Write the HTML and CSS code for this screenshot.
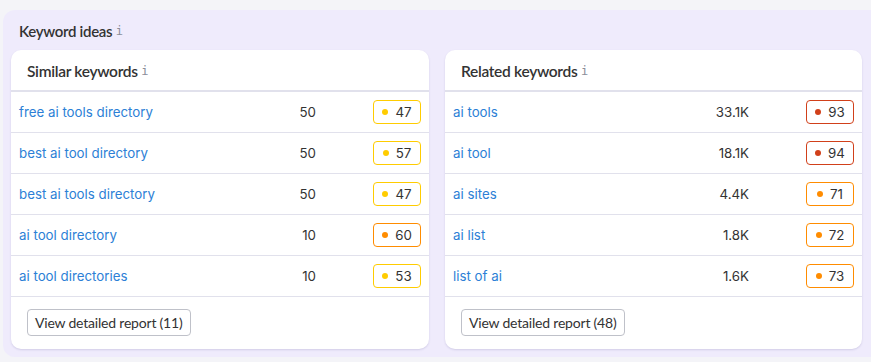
FILE: index.html
```html
<!DOCTYPE html>
<html>
<head>
    <title>Keyword ideas</title>
    <meta charset="UTF-8">
    <link rel="stylesheet" href="styles.css">
</head>
<body>
    <div class="panel">
        <h2 class="panel-title">Keyword ideas <span class="info">i</span></h2>
        <div class="cards">
            <div class="card">
                <h3 class="card-title">Similar keywords <span class="info">i</span></h3>
                <div class="rows">
                    <div class="row"><a href="#">free ai tools directory</a><span class="vol">50</span><span class="kd kd-yellow"><i></i>47</span></div>
                    <div class="row"><a href="#">best ai tool directory</a><span class="vol">50</span><span class="kd kd-yellow"><i></i>57</span></div>
                    <div class="row"><a href="#">best ai tools directory</a><span class="vol">50</span><span class="kd kd-yellow"><i></i>47</span></div>
                    <div class="row"><a href="#">ai tool directory</a><span class="vol">10</span><span class="kd kd-orange"><i></i>60</span></div>
                    <div class="row"><a href="#">ai tool directories</a><span class="vol">10</span><span class="kd kd-yellow"><i></i>53</span></div>
                </div>
                <div class="card-foot"><button>View detailed report (11)</button></div>
            </div>
            <div class="card">
                <h3 class="card-title">Related keywords <span class="info">i</span></h3>
                <div class="rows">
                    <div class="row"><a href="#">ai tools</a><span class="vol">33.1K</span><span class="kd kd-red"><i></i>93</span></div>
                    <div class="row"><a href="#">ai tool</a><span class="vol">18.1K</span><span class="kd kd-red"><i></i>94</span></div>
                    <div class="row"><a href="#">ai sites</a><span class="vol">4.4K</span><span class="kd kd-orange"><i></i>71</span></div>
                    <div class="row"><a href="#">ai list</a><span class="vol">1.8K</span><span class="kd kd-orange"><i></i>72</span></div>
                    <div class="row"><a href="#">list of ai</a><span class="vol">1.6K</span><span class="kd kd-orange"><i></i>73</span></div>
                </div>
                <div class="card-foot"><button>View detailed report (48)</button></div>
            </div>
        </div>
    </div>
</body>
</html>
```

FILE: styles.css
```css
body {
    background-color: #f4f4f8;
    font-family: Inter, 'Noto Sans', Arial, sans-serif;
    margin: 0;
    padding: 10px 0 0 3px;
    overflow: hidden;
}
.panel {
    background-color: #efebfc;
    border-radius: 12px 0 0 12px;
    padding: 10px 0 8px 8px;
    width: 876px;
}
.panel-title {
    color: #333;
    font-family: Lato, Arial, sans-serif;
    font-size: 15px;
    font-weight: 600;
    height: 22px;
    letter-spacing: -0.3px;
    line-height: 22px;
    margin: 0 0 8px 8px;
}
.info {
    color: #8b8e99;
    font-family: 'DejaVu Sans Mono', monospace;
    font-size: 12px;
    font-weight: 400;
    letter-spacing: 0;
    line-height: 0;
    vertical-align: 2px;
}
.cards {
    display: flex;
    gap: 16px;
}
.card {
    background-color: #fff;
    border-radius: 10px;
    box-shadow: 0 1px 2px rgba(80, 70, 140, 0.18);
    width: 418px;
}
.card + .card {
    width: 417px;
}
.card-title {
    border-bottom: 2px solid #e1e1ec;
    box-sizing: border-box;
    color: #333;
    font-family: Lato, Arial, sans-serif;
    font-size: 15.5px;
    font-weight: 600;
    height: 42px;
    letter-spacing: -0.3px;
    line-height: 22px;
    margin: 0;
    padding: 10px 16px 8px;
}
.row {
    align-items: center;
    border-bottom: 1px solid #e1e1ec;
    display: flex;
    font-size: 13.3px;
    height: 40px;
    padding: 0 8px;
}
.row a {
    color: #2d7fd6;
    flex: 1;
    text-decoration: none;
}
.vol {
    color: #333;
    margin-right: 57px;
    text-align: right;
}
.kd {
    align-items: center;
    border: 1px solid;
    border-radius: 4px;
    box-sizing: border-box;
    color: #333;
    display: flex;
    gap: 7px;
    height: 24px;
    justify-content: center;
    width: 48px;
}
.kd i {
    border-radius: 50%;
    height: 6px;
    width: 6px;
}
.kd-yellow { border-color: #ffcc00; }
.kd-yellow i { background-color: #ffcc00; }
.kd-orange { border-color: #ff8c00; }
.kd-orange i { background-color: #ff8c00; }
.kd-red { border-color: #d1401a; }
.kd-red i { background-color: #d1401a; }
.card-foot {
    padding: 12px 16px 13px;
}
.card-foot button {
    background-color: #fff;
    border: 1px solid #bfc1c9;
    border-radius: 4px;
    color: #333;
    cursor: pointer;
    font-family: Lato, Arial, sans-serif;
    font-size: 14px;
    height: 27px;
    letter-spacing: -0.2px;
    padding: 0 7px;
}
```
